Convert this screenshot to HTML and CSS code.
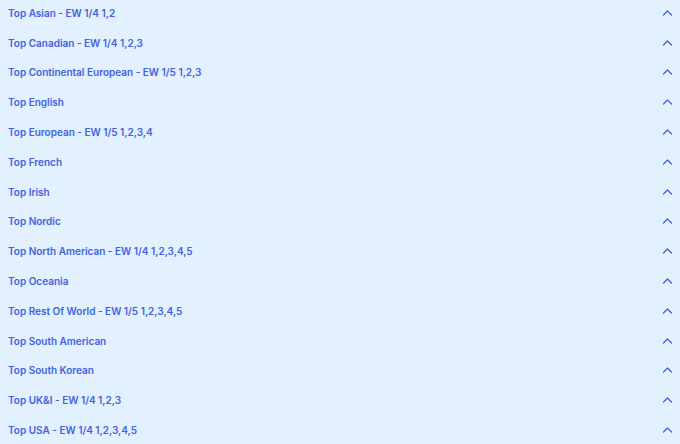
FILE: index.html
```html
<!DOCTYPE html>
<html lang="en">
<head>
    <meta charset="UTF-8">
    <meta name="viewport" content="width=device-width, initial-scale=1.0">
    <title>Top Markets</title>
    <link rel="stylesheet" href="styles.css">
</head>
<body>
<div class="market-list">
    <div class="market-row"><span class="market-name">Top Asian - EW 1/4 1,2</span><svg class="chevron" viewBox="0 0 10 6"><path d="M1 5 L5 1 L9 5"/></svg></div>
    <div class="market-row"><span class="market-name">Top Canadian - EW 1/4 1,2,3</span><svg class="chevron" viewBox="0 0 10 6"><path d="M1 5 L5 1 L9 5"/></svg></div>
    <div class="market-row"><span class="market-name">Top Continental European - EW 1/5 1,2,3</span><svg class="chevron" viewBox="0 0 10 6"><path d="M1 5 L5 1 L9 5"/></svg></div>
    <div class="market-row"><span class="market-name">Top English</span><svg class="chevron" viewBox="0 0 10 6"><path d="M1 5 L5 1 L9 5"/></svg></div>
    <div class="market-row"><span class="market-name">Top European - EW 1/5 1,2,3,4</span><svg class="chevron" viewBox="0 0 10 6"><path d="M1 5 L5 1 L9 5"/></svg></div>
    <div class="market-row"><span class="market-name">Top French</span><svg class="chevron" viewBox="0 0 10 6"><path d="M1 5 L5 1 L9 5"/></svg></div>
    <div class="market-row"><span class="market-name">Top Irish</span><svg class="chevron" viewBox="0 0 10 6"><path d="M1 5 L5 1 L9 5"/></svg></div>
    <div class="market-row"><span class="market-name">Top Nordic</span><svg class="chevron" viewBox="0 0 10 6"><path d="M1 5 L5 1 L9 5"/></svg></div>
    <div class="market-row"><span class="market-name">Top North American - EW 1/4 1,2,3,4,5</span><svg class="chevron" viewBox="0 0 10 6"><path d="M1 5 L5 1 L9 5"/></svg></div>
    <div class="market-row"><span class="market-name">Top Oceania</span><svg class="chevron" viewBox="0 0 10 6"><path d="M1 5 L5 1 L9 5"/></svg></div>
    <div class="market-row"><span class="market-name">Top Rest Of World - EW 1/5 1,2,3,4,5</span><svg class="chevron" viewBox="0 0 10 6"><path d="M1 5 L5 1 L9 5"/></svg></div>
    <div class="market-row"><span class="market-name">Top South American</span><svg class="chevron" viewBox="0 0 10 6"><path d="M1 5 L5 1 L9 5"/></svg></div>
    <div class="market-row"><span class="market-name">Top South Korean</span><svg class="chevron" viewBox="0 0 10 6"><path d="M1 5 L5 1 L9 5"/></svg></div>
    <div class="market-row"><span class="market-name">Top UK&amp;I - EW 1/4 1,2,3</span><svg class="chevron" viewBox="0 0 10 6"><path d="M1 5 L5 1 L9 5"/></svg></div>
    <div class="market-row"><span class="market-name">Top USA - EW 1/4 1,2,3,4,5</span><svg class="chevron" viewBox="0 0 10 6"><path d="M1 5 L5 1 L9 5"/></svg></div>
</div>
</body>
</html>
```

FILE: styles.css
```css
body {
    margin: 0;
    padding: 0;
    background: #e3f0fe;
    font-family: Inter, 'Noto Sans', sans-serif;
    overflow: hidden;
}

.market-list {
    display: flex;
    flex-direction: column;
}

.market-row {
    display: flex;
    align-items: center;
    justify-content: space-between;
    height: 29.8px;
    padding: 0 7px 0 8px;
    margin-top: -2px;
    margin-bottom: 2px;
    box-sizing: border-box;
}

.market-name {
    color: #3f62e4;
    font-size: 10px;
    font-weight: 600;
    line-height: 14px;
}

.chevron {
    width: 11px;
    height: 6px;
    fill: none;
    stroke: #3f62e4;
    stroke-width: 1.3;
    stroke-linecap: round;
    stroke-linejoin: round;
}
```
